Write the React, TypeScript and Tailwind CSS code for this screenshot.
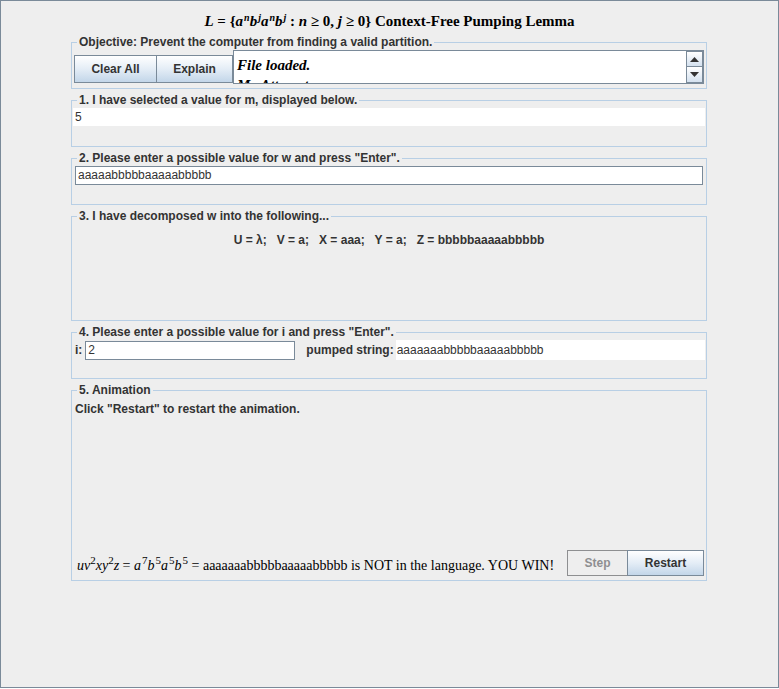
import React from "react";

const sans = "font-['Liberation_Sans',Arial,sans-serif]";
const serif = "font-['Liberation_Serif','Times_New_Roman',serif]";

function Panel({ title, className, children }: { title: string; className: string; children?: React.ReactNode }) {
  return (
    <fieldset className={`border border-[#b8cfe5] px-px ${className}`}>
      <legend className={`ml-1 px-0.5 text-[12px] font-bold leading-[14px] text-[#333333] ${sans}`}>{title}</legend>
      {children}
    </fieldset>
  );
}

const oceanBtn =
  "border border-[#7a8a99] bg-gradient-to-b from-[#ffffff] via-[#e4edf6] to-[#c3d6e9] text-[12px] font-bold text-[#333333]";

export default function App() {
  return (
    <div className={`w-[779px] h-[688px] border border-[#7a8a99] bg-[#eeeeee] ${sans}`}>
      {/* title */}
      <div className={`pt-[9px] h-[34px] text-center text-[15px] font-bold text-black ${serif}`}>
        <i>L</i> = {"{"}
        <i>a</i>
        <sup className="text-[10px] pl-px"><i>n</i></sup>
        <i>b</i>
        <sup className="text-[10px] pl-px"><i>j</i></sup>
        <i>a</i>
        <sup className="text-[10px] pl-px"><i>n</i></sup>
        <i>b</i>
        <sup className="text-[10px] pl-px"><i>j</i></sup> : <i>n</i> ≥ 0, <i>j</i> ≥ 0{"}"} Context-Free Pumping Lemma
      </div>

      <div className="ml-[70px] flex w-[636px] flex-col gap-1">
        <Panel title="Objective: Prevent the computer from finding a valid partition." className="h-[54px]">
          <div className="flex pl-[1px] pt-[1px]">
            <button className={`${oceanBtn} h-[28px] w-[83px] mt-[5px]`}>Clear All</button>
            <button className={`${oceanBtn} -ml-px h-[28px] w-[77px] mt-[5px]`}>Explain</button>
            <div className="flex h-[34px] w-[471px] border border-[#7a8a99] bg-white">
              <div className={`flex-1 overflow-hidden pl-[3px] pt-[4px] text-[15px] font-bold italic leading-[20px] text-black ${serif}`}>
                <div>File loaded.</div>
                <div>My Attempts:</div>
              </div>
              <div className="flex w-[17px] flex-col">
                <div className="flex h-[16px] items-center justify-center border border-[#7a8a99] bg-gradient-to-b from-white to-[#d4e1ef]">
                  <svg width="9" height="5" viewBox="0 0 9 5"><path d="M4.5 0L9 5H0z" fill="#333" /></svg>
                </div>
                <div className="flex h-[16px] items-center justify-center border border-t-0 border-[#7a8a99] bg-gradient-to-b from-white to-[#d4e1ef]">
                  <svg width="9" height="5" viewBox="0 0 9 5"><path d="M0 0H9L4.5 5z" fill="#333" /></svg>
                </div>
              </div>
            </div>
          </div>
        </Panel>

        <Panel title="1. I have selected a value for m, displayed below." className="h-[54px]">
          <div className="mt-[1px] h-[18px] bg-white pl-[2px] text-[12px] leading-[18px] text-[#333333]">5</div>
        </Panel>

        <Panel title={'2. Please enter a possible value for w and press "Enter".'} className="h-[54px]">
          <div className="mx-[2px] mt-[1px] h-[19px] border border-[#7a8a99] bg-white pl-[2px] text-[12px] leading-[17px] text-[#333333]">
            aaaaabbbbbaaaaabbbbb
          </div>
        </Panel>

        <Panel title="3. I have decomposed w into the following..." className="h-[112px]">
          <div className="pt-[8px] text-center text-[12px] font-bold text-[#333333]">
            U = λ;&nbsp;&nbsp; V = a;&nbsp;&nbsp; X = aaa;&nbsp;&nbsp; Y = a;&nbsp;&nbsp; Z = bbbbbaaaaabbbbb
          </div>
        </Panel>

        <Panel title={'4. Please enter a possible value for i and press "Enter".'} className="h-[54px]">
          <div className="mt-[1px] flex items-center text-[12px] text-[#333333]">
            <span className="pl-[2px] pr-[3px] font-bold">i:</span>
            <div className="h-[19px] w-[210px] border border-[#7a8a99] bg-white pl-[2px] leading-[17px]">2</div>
            <span className="ml-[11px] font-bold">pumped string:</span>
            <div className="ml-[2px] h-[20px] flex-1 bg-white pl-[1px] leading-[20px]">aaaaaaabbbbbaaaaabbbbb</div>
          </div>
        </Panel>

        <Panel title="5. Animation" className="h-[198px]">
          <div className="flex h-[181px] flex-col">
            <div className="pl-[2px] pt-[3px] text-[12px] font-bold text-[#333333]">Click "Restart" to restart the animation.</div>
            <div className="mt-auto mb-[2px] flex items-center">
              <div className={`flex-1 whitespace-nowrap pl-[4px] pt-[4px] text-[14px] text-black ${serif}`}>
                <i>uv</i>
                <sup className="text-[11px]">2</sup>
                <i>xy</i>
                <sup className="text-[11px]">2</sup>
                <i>z</i> = <i>a</i>
                <sup className="text-[11px] pl-px">7</sup>
                <i>b</i>
                <sup className="text-[11px] pl-px">5</sup>
                <i>a</i>
                <sup className="text-[11px] pl-px">5</sup>
                <i>b</i>
                <sup className="text-[11px] pl-px">5</sup> = aaaaaaabbbbbaaaaabbbbb is NOT in the language. YOU WIN!
              </div>
              <button className="h-[26px] w-[61px] border border-[#8e8f91] bg-[#eeeeee] text-[12px] font-bold text-[#8e8f91]">Step</button>
              <button className={`${oceanBtn} -ml-px mr-[1px] h-[26px] w-[77px]`}>Restart</button>
            </div>
          </div>
        </Panel>
      </div>
    </div>
  );
}
